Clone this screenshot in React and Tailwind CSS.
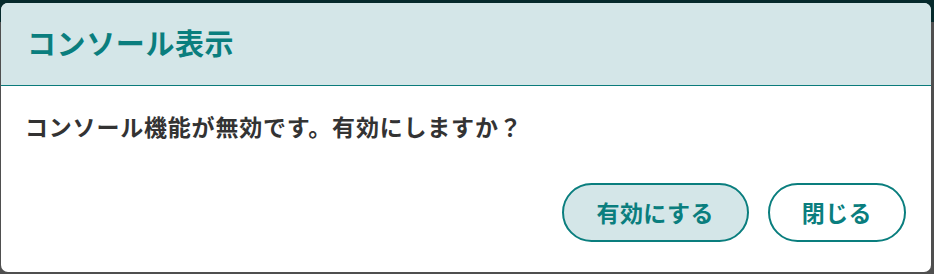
import React from 'react';

const font = { fontFamily: '"Noto Sans CJK JP", "Noto Sans", sans-serif' };

const App = () => {
  return (
    <div className="relative w-[934px] h-[274px] overflow-hidden bg-[#4f4f4f]" style={font}>
      <div className="h-[22px] bg-[#062a2c]" />

      <div className="absolute left-[1px] top-[3px] w-[930px] h-[269px] bg-white rounded-[7px] overflow-hidden flex flex-col">
        <div className="h-[83px] shrink-0 bg-[#d4e6e8] border-b border-[#0b7b7b] flex items-center pl-[26px] pb-[4px]">
          <h2 className="text-[29px] font-bold text-[#0a7e7e] leading-none tracking-[0.6px]">コンソール表示</h2>
        </div>

        <div className="pl-[24px] pt-[29px]">
          <p className="text-[23px] font-bold text-[#333333] leading-none tracking-[0.8px]">
            コンソール機能が無効です。有効にしますか？
          </p>
        </div>

        <div className="mt-auto flex justify-end gap-[19px] pr-[25px] pb-[30px]">
          <button className="h-[59px] px-[33px] rounded-full border-[2.5px] border-[#0a7e7e] bg-[#d4e6e8] text-[23px] font-bold text-[#0a7e7e] leading-none tracking-[0.4px]">
            有効にする
          </button>
          <button className="h-[59px] px-[32px] rounded-full border-[2.5px] border-[#0a7e7e] bg-white text-[23px] font-bold text-[#0a7e7e] leading-none tracking-[0.4px]">
            閉じる
          </button>
        </div>
      </div>
    </div>
  );
};

export default App;
